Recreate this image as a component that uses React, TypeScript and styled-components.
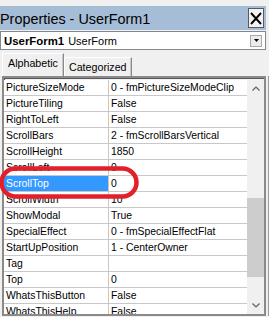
import React from "react";
import styled, { createGlobalStyle } from "styled-components";

const GlobalStyle = createGlobalStyle`
  html, body {
    margin: 0;
    padding: 0;
    background: #f0f0f0;
  }
  body {
    font-family: "Liberation Sans", Arial, sans-serif;
    color: #000;
  }
`;

const properties: [string, string][] = [
  ["PictureSizeMode", "0 - fmPictureSizeModeClip"],
  ["PictureTiling", "False"],
  ["RightToLeft", "False"],
  ["ScrollBars", "2 - fmScrollBarsVertical"],
  ["ScrollHeight", "1850"],
  ["ScrollLeft", "0"],
  ["ScrollTop", "0"],
  ["ScrollWidth", "10"],
  ["ShowModal", "True"],
  ["SpecialEffect", "0 - fmSpecialEffectFlat"],
  ["StartUpPosition", "1 - CenterOwner"],
  ["Tag", ""],
  ["Top", "0"],
  ["WhatsThisButton", "False"],
  ["WhatsThisHelp", "False"],
];

const App: React.FC = () => {
  return (
    <Window>
      <GlobalStyle />
      <TitleBar>
        <Title>Properties - UserForm1</Title>
        <CloseButton>
          <svg width="12" height="13" viewBox="0 0 12 13">
            <path d="M1 1 L11 12 M11 1 L1 12" stroke="#000" strokeWidth="1.9" />
          </svg>
        </CloseButton>
      </TitleBar>

      <Combo>
        <ObjectName>UserForm1</ObjectName>
        <ObjectType>UserForm</ObjectType>
        <ComboButton>
          <svg width="5" height="3" viewBox="0 0 5 3">
            <path d="M0 0 H5 L2.5 3 Z" fill="#000" />
          </svg>
        </ComboButton>
      </Combo>

      <TabStrip>
        <Tab $active>Alphabetic</Tab>
        <Tab>Categorized</Tab>
      </TabStrip>

      <Grid>
        <Rows>
          {properties.map(([name, value]) => (
            <Row key={name}>
              <NameCell $selected={name === "ScrollTop"}>{name}</NameCell>
              <ValueCell>{value}</ValueCell>
            </Row>
          ))}
        </Rows>
        <ScrollBar>
          <ArrowBox>
            <svg width="8" height="5" viewBox="0 0 8 5">
              <path d="M0.5 4.5 L4 1 L7.5 4.5" fill="none" stroke="#606060" strokeWidth="1.2" />
            </svg>
          </ArrowBox>
          <Track>
            <Thumb style={{ marginTop: 101, height: 79 }} />
          </Track>
          <ArrowBox>
            <svg width="8" height="5" viewBox="0 0 8 5">
              <path d="M0.5 0.5 L4 4 L7.5 0.5" fill="none" stroke="#606060" strokeWidth="1.2" />
            </svg>
          </ArrowBox>
        </ScrollBar>
      </Grid>

      <Annotation width="142" height="34" viewBox="0 0 142 34">
        <rect x="2.5" y="2.5" width="135" height="28" rx="14" ry="14" fill="none" stroke="#e2202a" strokeWidth="4.5" />
      </Annotation>
    </Window>
  );
};

export default App;

const Window = styled.div`
  position: relative;
  width: 269px;
  height: 317px;
  box-sizing: border-box;
  padding-top: 6px;
  overflow: hidden;
  display: flex;
  flex-direction: column;
`;

const TitleBar = styled.div`
  height: 24px;
  margin-right: 3px;
  background: #a5bdd7;
  display: flex;
  align-items: center;
  justify-content: space-between;
`;

const Title = styled.div`
  font-size: 14.4px;
  margin-top: 1px;
`;

const CloseButton = styled.div`
  width: 16px;
  height: 20px;
  box-sizing: border-box;
  margin-right: 2px;
  background: #f2f2f2;
  border: 1px solid #5a5a5a;
  display: flex;
  align-items: center;
  justify-content: center;
`;

const Combo = styled.div`
  height: 19px;
  margin: 1px 3px 0 0;
  box-sizing: border-box;
  background: #fff;
  border: 1px solid #828790;
  display: flex;
  align-items: center;
  padding-left: 3px;
  font-size: 11px;
`;

const ObjectName = styled.span`
  font-weight: bold;
  font-size: 11.4px;
`;

const ObjectType = styled.span`
  margin-left: 4px;
`;

const ComboButton = styled.div`
  margin-left: auto;
  margin-right: 3px;
  width: 12px;
  height: 12px;
  box-sizing: border-box;
  border: 1px solid #a8a8a8;
  background: #ececec;
  display: flex;
  align-items: center;
  justify-content: center;
`;

const TabStrip = styled.div`
  height: 23px;
  margin-top: 3px;
  padding-left: 2px;
  display: flex;
  align-items: flex-end;
`;

const Tab = styled.div<{ $active?: boolean }>`
  height: ${(p) => (p.$active ? "23px" : "19px")};
  padding: 0 ${(p) => (p.$active ? "5px" : "4px")};
  padding-bottom: ${(p) => (p.$active ? "4px" : "0")};
  box-sizing: border-box;
  border-top: 1px solid #fff;
  border-left: 1px solid #fff;
  border-right: 1px solid #8a8a8a;
  box-shadow: inset -1px 0 0 #c8c8c8;
  background: #f0f0f0;
  font-size: 10.7px;
  display: flex;
  align-items: center;
`;

const Grid = styled.div`
  flex: 1;
  margin: 0 3px 1px 2px;
  box-sizing: border-box;
  border: 2px solid #8a8a8a;
  box-shadow: inset 1px 1px 0 #5a5a5a, 2px 0 0 #f0f0f0, 3px 0 0 #9a9a9a;
  padding-top: 2px;
  display: flex;
  min-height: 0;
`;

const Rows = styled.div`
  flex: 1;
  overflow: hidden;
  background: #fff;
`;

const Row = styled.div`
  display: grid;
  grid-template-columns: 105px 1fr;
  height: 16px;
  box-sizing: border-box;
  border-bottom: 1px solid #c8c8c8;
  font-size: 10.4px;
  line-height: 15px;
  white-space: nowrap;
`;

const NameCell = styled.div<{ $selected?: boolean }>`
  border-right: 1px solid #c8c8c8;
  padding-left: 2px;
  background: ${(p) => (p.$selected ? "#3399ff" : "#fff")};
  color: ${(p) => (p.$selected ? "#fff" : "#000")};
  overflow: hidden;
`;

const ValueCell = styled.div`
  padding-left: 2px;
  overflow: hidden;
`;

const ScrollBar = styled.div`
  width: 17px;
  background: #f0f0f0;
  display: flex;
  flex-direction: column;
`;

const ArrowBox = styled.div`
  height: 17px;
  display: flex;
  align-items: center;
  justify-content: center;
`;

const Track = styled.div`
  flex: 1;
  display: flex;
  flex-direction: column;
  align-items: center;
`;

const Thumb = styled.div`
  width: 17px;
  background: #cdcdcd;
`;

const Annotation = styled.svg`
  position: absolute;
  left: -1px;
  top: 166px;
  pointer-events: none;
`;
